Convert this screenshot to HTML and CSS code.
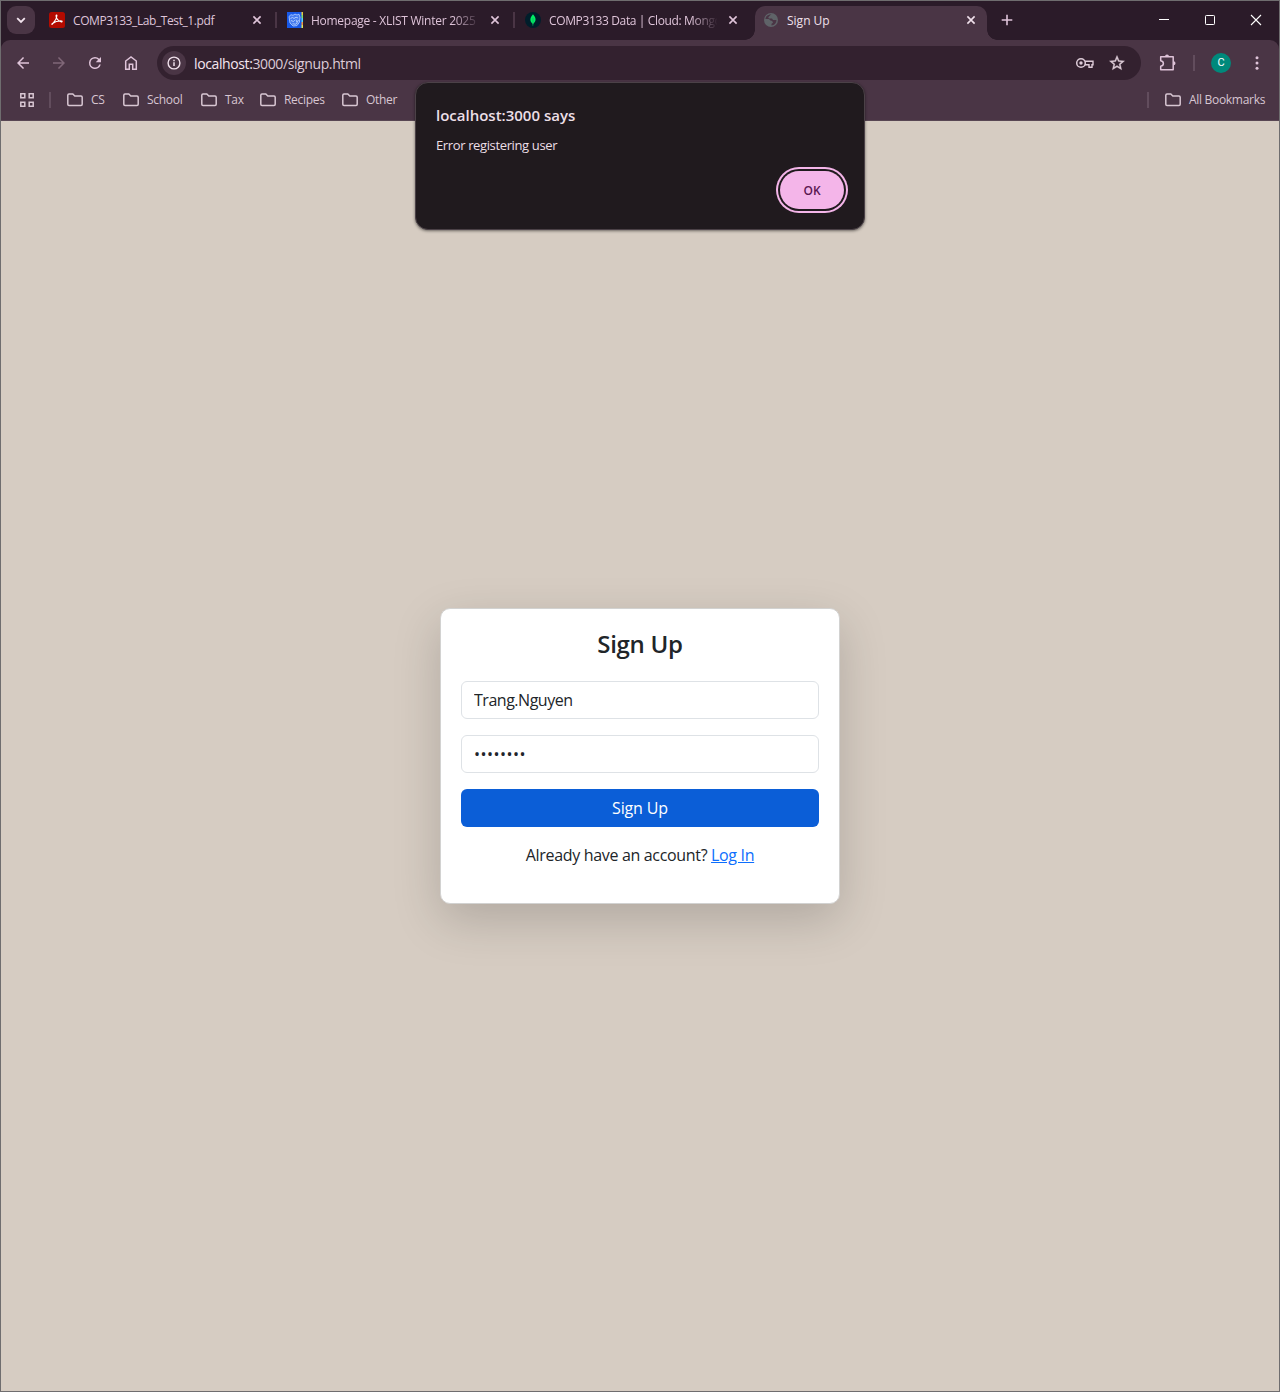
FILE: index.html
```html
<!DOCTYPE html>
<html lang="en">
<head>
<meta charset="utf-8">
<title>Sign Up</title>
<link rel="stylesheet" href="styles.css">
</head>
<body>
<svg width="0" height="0" class="defs">
  <symbol id="close" viewBox="0 0 16 16"><path d="M4.4 4.4l7.2 7.2M11.6 4.4l-7.2 7.2" fill="none" stroke="currentColor" stroke-width="1.6"/></symbol>
  <symbol id="folder" viewBox="0 0 16 16"><path d="M.8 3.2q0-1.2 1.2-1.2h3.8l2 2h6.2q1.2 0 1.2 1.2v7.1q0 1.2-1.2 1.2H2q-1.2 0-1.2-1.2z" fill="none" stroke="currentColor" stroke-width="1.5"/></symbol>
  <symbol id="arrow" viewBox="0 0 24 24"><path d="M20 11H7.83l5.59-5.59L12 4l-8 8 8 8 1.41-1.41L7.83 13H20z" fill="currentColor"/></symbol>
</svg>
<div class="window">
  <header class="tabstrip">
    <button class="tab-search"><svg width="16" height="16" viewBox="0 0 16 16"><path d="M4.2 6.2L8 10l3.8-3.8" fill="none" stroke="currentColor" stroke-width="1.8"/></svg></button>
    <div class="tab">
      <svg width="16" height="16" viewBox="0 0 16 16"><rect width="16" height="16" rx="2.5" fill="#b30b00"/><path d="M3.3 12.1C4.6 10.4 7.8 8.5 7.900 3.600c0-.9-.9-.7-.8.4.2 2.900 2.600 5 5.300 5.800 1 .2.9-.9-.2-.9-3.200-.1-6.200.7-8.800 2.600-.8.6-.6 1.200-.1.6z" fill="none" stroke="#fff" stroke-width="1.2" stroke-linejoin="round"/></svg>
      <span class="title t1">COMP3133_Lab_Test_1.pdf</span><svg class="x"><use href="#close"/></svg>
    </div>
    <i class="gap line"></i>
    <div class="tab">
      <svg width="16" height="16" viewBox="0 0 16 16"><rect width="16" height="16" fill="#1859e8"/><path d="M14.5 0h1.5v3h-1.5z" fill="#e8c93d"/><path d="M14.5 3h1.5v3h-1.5z" fill="#87df62"/><path d="M14.5 6h1.5v4h-1.5z" fill="#58d5ee"/><path d="M14.5 10h1.5v3h-1.5z" fill="#ef9442"/><path d="M14.5 13h1.5v3h-1.5z" fill="#e6e750"/><path d="M2 4.5l2-1.8 2 .6 2-1.2 2 .9 2-.8 1 3-.6 5L10 13.6 6 14l-3-3z" fill="#467bef" stroke="#a9c7ff" stroke-width=".9"/><path d="M3.5 6.5l2-1 1.5 1 2-1.3 2 .8M4 8.500l2.500 1 1.300-1.400M9 7.500l1 3 1.500-2.500M5.500 11.800l3 .4 2-1.200" fill="none" stroke="#b8d2ff" stroke-width=".9"/></svg>
      <span class="title fade t2">Homepage - XLIST Winter 2025</span><svg class="x"><use href="#close"/></svg>
    </div>
    <i class="gap line"></i>
    <div class="tab">
      <svg width="16" height="16" viewBox="0 0 16 16"><circle cx="8" cy="8" r="8" fill="#001e2b"/><path d="M8 2.300c3.600 3.700 3.200 7.200.3 9.500L8.100 13.700h-.4l-.1-1.900C4.700 9.500 4.500 6 8 2.300z" fill="#00ed64"/><path d="M8 6v6" stroke="#12a85a" stroke-width=".6"/></svg>
      <span class="title fade t3">COMP3133 Data | Cloud: Mongo</span><svg class="x"><use href="#close"/></svg>
    </div>
    <i class="gap"></i>
    <div class="tab active">
      <svg width="16" height="16" viewBox="0 0 16 16"><circle cx="8" cy="8" r="7" fill="#5f6368"/><path d="M8.600 2.600c-2 .6-1.500 1.500-2.800 2.100-.8.4-.4 1.500.4 1.700h2.500c.8.200 1 1.600 2 1.600h2.700c.2 3-2.100 5.300-4.900 5.500v-1.800c1.600-.4 1.800-1.700 1-2.300-.9-.6-1.300-.3-2-.9-.7-.7-1.200-1.400-2.600-1.400H2.500C2.300 4.500 5.400 2 8.600 2.600z" fill="#4a3545"/></svg>
      <span class="title t4">Sign Up</span><svg class="x"><use href="#close"/></svg>
    </div>
    <button class="new-tab"><svg width="16" height="16" viewBox="0 0 16 16"><path d="M8 2.700v10.600M2.700 8h10.600" stroke="currentColor" stroke-width="1.600"/></svg></button>
    <div class="controls">
      <span><svg width="12" height="12" viewBox="0 0 12 12"><path d="M1 5.500h10" stroke="#fff"/></svg></span>
      <span><svg width="12" height="12" viewBox="0 0 12 12"><rect x="1.500" y="1.500" width="9" height="9" rx=".8" fill="none" stroke="#fff"/></svg></span>
      <span><svg width="12" height="12" viewBox="0 0 12 12"><path d="M1 1l10 10M11 1L1 11" stroke="#fff" stroke-width="1.100"/></svg></span>
    </div>
  </header>
  <div class="chrome">
  <nav class="toolbar">
    <span class="tool"><svg width="18" height="18"><use href="#arrow"/></svg></span>
    <span class="tool forward"><svg width="18" height="18"><use href="#arrow"/></svg></span>
    <span class="tool"><svg width="18" height="18" viewBox="0 0 24 24"><path d="M17.650 6.350A7.958 7.958 0 0 0 12 4a8 8 0 1 0 7.730 10h-2.080A6 6 0 1 1 12 6c1.660 0 3.140.69 4.220 1.780L13 11h7V4z" fill="currentColor"/></svg></span>
    <span class="tool"><svg width="18" height="18" viewBox="0 0 18 18"><path d="M3.700 15.200V7L9 3l5.300 4v8.200h-3.600v-5H7.300v5z" fill="none" stroke="currentColor" stroke-width="1.500"/></svg></span>
    <div class="omnibox">
      <span class="info"><svg width="16" height="16" viewBox="0 0 16 16"><circle cx="8" cy="8" r="5.900" fill="none" stroke="currentColor" stroke-width="1.400"/><path d="M8 7.200v3.800M8 4.700v1.500" stroke="currentColor" stroke-width="1.500"/></svg></span>
      <span class="url"><b>localhost:</b>3000/signup.html</span>
      <svg width="20" height="16" viewBox="0 0 20 16"><circle cx="6" cy="8" r="4.300" fill="none" stroke="currentColor" stroke-width="1.500"/><circle cx="6" cy="8" r="1.700" fill="currentColor"/><path d="M10 6.300h8v3.400h-1v2.500h-3V9.700h-4" fill="none" stroke="currentColor" stroke-width="1.400"/></svg>
      <svg width="18" height="18" viewBox="0 0 24 24"><path d="M22 9.240l-7.190-.62L12 2 9.190 8.630 2 9.240l5.460 4.730L5.820 21 12 17.270 18.180 21l-1.630-7.030zM12 15.400l-3.760 2.270 1-4.280-3.320-2.880 4.380-.38L12 6.100l1.710 4.040 4.380.38-3.320 2.880 1 4.280z" fill="currentColor" stroke="currentColor" stroke-width=".5"/></svg>
    </div>
    <svg class="puzzle" width="20" height="20" viewBox="0 0 20 20"><path d="M3.700 3.700H16.200V16.700H3.700V13.200C7.300 12.700 7.300 8.200 3.700 7.700z" fill="none" stroke="currentColor" stroke-width="1.500" stroke-linejoin="round"/><path d="M8 3.500a2 2 0 0 1 4 0zM16.500 8.200a2 2 0 0 1 0 4z" fill="currentColor"/></svg>
    <i class="divider"></i>
    <span class="avatar">C</span>
    <svg class="menu" width="16" height="16" viewBox="0 0 16 16" fill="currentColor"><circle cx="8" cy="2.700" r="1.500"/><circle cx="8" cy="8" r="1.500"/><circle cx="8" cy="13.300" r="1.500"/></svg>
  </nav>
  <nav class="bookmarks">
    <svg width="16" height="16" viewBox="0 0 16 16"><path d="M1.800 1.800h4v4h-4zM10.200 1.800h4v4h-4zM1.800 10.200h4v4h-4zM10.200 10.200h4v4h-4z" fill="none" stroke="currentColor" stroke-width="1.500"/></svg>
    <i class="divider"></i>
    <span class="bm cs"><svg><use href="#folder"/></svg><span>CS</span></span>
    <span class="bm school"><svg><use href="#folder"/></svg><span>School</span></span>
    <span class="bm tax"><svg><use href="#folder"/></svg><span>Tax</span></span>
    <span class="bm recipes"><svg><use href="#folder"/></svg><span>Recipes</span></span>
    <span class="bm other"><svg><use href="#folder"/></svg><span>Other</span></span>
    <i class="divider end"></i>
    <span class="bm all"><svg><use href="#folder"/></svg><span>All Bookmarks</span></span>
  </nav>
  </div>
  <main class="page">
    <form class="card">
      <h1>Sign Up</h1>
      <input class="user" type="text" value="Trang.Nguyen">
      <input class="pass" type="password" value="password">
      <button class="submit" type="button">Sign Up</button>
      <p>Already have an account? <a href="#">Log In</a></p>
    </form>
  </main>
  <div class="dialog" role="alertdialog">
    <h2>localhost:3000 says</h2>
    <p>Error registering user</p>
    <button class="ok">OK</button>
  </div>
</div>
</body>
</html>
```
FILE: styles.css
```css
* { box-sizing: border-box; }
body { margin: 0; font-family: "Open Sans", "Noto Sans", sans-serif; }
button { border: 0; padding: 0; font-family: inherit; color: inherit; }
svg { display: block; flex: none; }
.defs { position: absolute; }
.window { position: relative; display: flex; flex-direction: column; height: 1392px; border: 1px solid #6f6d6f; background: #2b1b29; color: #dfc4d9; }

.tabstrip { display: flex; height: 39px; padding: 5px 0 0 6px; }
.tab-search { display: grid; place-items: center; width: 28px; height: 28px; margin-right: 6px; border-radius: 9px; background: #4a3545; color: #f3e4ee; }
.tab { position: relative; display: flex; gap: 8px; width: 232px; height: 34px; padding: 6px 8px; font-size: 12px; line-height: 17px; }
.title { width: 168px; overflow: hidden; white-space: nowrap; }
.t1 { letter-spacing: -.41px; }
.t2 { letter-spacing: -.27px; }
.t3 { letter-spacing: -.36px; }
.fade { -webkit-mask-image: linear-gradient(90deg, #000 142px, transparent 169px); mask-image: linear-gradient(90deg, #000 142px, transparent 169px); }
.x { width: 16px; height: 16px; }
.gap { width: 6px; height: 16px; margin-top: 6px; }
.gap.line { border: solid #2b1b29; border-width: 0 2px; background: #4a3545; }
.active { border-radius: 10px 10px 0 0; background: #4a3545; color: #f0e0eb; }
.active::before, .active::after { content: ""; position: absolute; bottom: 0; width: 10px; height: 10px; }
.active::before { left: -10px; background: radial-gradient(circle at 0 0, transparent 9.5px, #4a3545 10px); }
.active::after { right: -10px; background: radial-gradient(circle at 100% 0, transparent 9.5px, #4a3545 10px); }
.new-tab { width: 16px; height: 16px; margin: 6px 0 0 12px; background: none; }
.controls { display: flex; margin: -5px 0 0 auto; }
.controls span { display: grid; place-items: center; width: 46px; height: 38px; }

.chrome { height: 81px; border-radius: 9px 9px 0 0; border-bottom: 1px solid #584653; background: #4a3545; }
.toolbar { display: flex; align-items: center; height: 46px; padding-left: 4px; }
.tool { display: grid; place-items: center; width: 36px; height: 34px; }
.forward { color: #806778; }
.forward svg { transform: scaleX(-1); }
.omnibox { display: flex; align-items: center; width: 984px; height: 34px; margin-left: 8px; padding: 0 15px 0 5px; border-radius: 17px; background: #33212f; color: #ddcbd7; }
.info { display: grid; place-items: center; width: 24px; height: 24px; border-radius: 50%; background: #4a3545; color: #f0e0eb; }
.url { margin: 0 auto 0 8px; font-size: 14px; letter-spacing: -.39px; }
.url b { color: #f3e6ef; font-weight: 400; }
.omnibox > svg:last-child { margin-left: 13px; }
.puzzle { margin-left: 16px; }
.divider { width: 2px; height: 16px; background: #624d5d; }
.toolbar .divider { margin-left: 16px; }
.avatar { width: 20px; height: 20px; margin-left: 16px; border-radius: 50%; background: #00897b; color: #fff; text-align: center; font: 11px/20px Roboto, sans-serif; }
.menu { margin-left: 18px; }

.bookmarks { display: flex; align-items: center; height: 28px; padding: 0 14px 0 18px; font-size: 12px; letter-spacing: -.3px; color: #d8c6d2; white-space: nowrap; }
.bookmarks .divider { margin: 0 16px 0 14px; }
.bookmarks .end { margin-left: auto; }
.bm { display: flex; align-items: center; gap: 8px; }
.bm svg { width: 16px; height: 16px; }
.bm span { padding-bottom: 1px; }
.cs { width: 56px; }
.school { width: 78px; }
.tax { width: 59px; }
.recipes { width: 82px; }
.all { width: 100px; }

.page { display: grid; flex: 1; place-items: center; background: #d6ccc2; }
.card { display: flex; flex-direction: column; width: 400px; height: 296px; padding: 20px; border: 1px solid #d2d2d1; border-radius: 10px; background: #fff; box-shadow: 0 16px 48px rgba(0, 0, 0, .176); color: #212529; font-size: 16px; line-height: 24px; }
.card h1 { margin: 0 0 22px; font-size: 24px; line-height: 30px; font-weight: 600; letter-spacing: -.3px; text-align: center; }
.card input { width: 100%; height: 38px; margin-bottom: 16px; padding: 6px 12px; border: 1px solid #dee2e6; border-radius: 6px; color: #212529; font: 16px/24px "Open Sans", sans-serif; letter-spacing: -.48px; }
.card .pass { letter-spacing: .5px; }
.submit { flex: none; height: 38px; border-radius: 6px; background: #0b5ed7; color: #fff; font-size: 16px; letter-spacing: -.15px; }
.card p { margin: 16px 0; text-align: center; letter-spacing: -.33px; }
.card a { color: #0d6efd; }

.dialog { position: absolute; top: 81px; left: 414px; display: flex; flex-direction: column; width: 450px; height: 148px; padding: 20px; border: 1px solid #4b4147; border-radius: 13px; background: #201a1e; box-shadow: 0 1px 3px rgba(0, 0, 0, .5); color: #ecdfe6; }
.dialog h2 { margin: 0; font-size: 15px; line-height: 24px; font-weight: 600; }
.dialog p { margin: 8px 0 0; font-size: 13px; line-height: 20px; letter-spacing: -.37px; }
.ok { width: 64px; height: 38px; margin: 16px 0 0 auto; flex: none; border-radius: 19px; background: #f4b5e9; box-shadow: 0 0 0 2px #201a1e, 0 0 0 4px #f4b5e9; color: #5b1751; font-size: 12px; font-weight: 600; }
```
